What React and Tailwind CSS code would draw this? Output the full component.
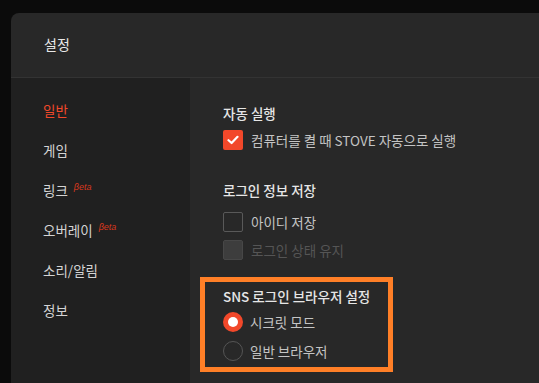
const font = { fontFamily: '"Noto Sans CJK KR", "Noto Sans", sans-serif' };

const menu = [
  { label: '일반', active: true },
  { label: '게임' },
  { label: '링크', beta: true },
  { label: '오버레이', beta: true },
  { label: '소리/알림' },
  { label: '정보' },
];

function Check({ checked, disabled }) {
  if (checked)
    return (
      <span className="w-5 h-5 rounded-[2px] bg-[#f2482a] flex items-center justify-center">
        <svg width="12" height="10" viewBox="0 0 12 10" fill="none">
          <path d="M1.5 5.2 L4.6 8 L10.5 1.8" stroke="white" strokeWidth="2.2" strokeLinecap="round" strokeLinejoin="round" />
        </svg>
      </span>
    );
  return (
    <span
      className={`w-5 h-5 rounded-[2px] border ${
        disabled ? 'bg-[#3d3d3d] border-[#474747]' : 'border-[#595959]'
      }`}
    />
  );
}

function Radio({ on }) {
  return on ? (
    <span className="w-5 h-5 rounded-full bg-[#f2482a] flex items-center justify-center">
      <span className="w-[10px] h-[10px] rounded-full bg-white" />
    </span>
  ) : (
    <span className="w-5 h-5 rounded-full border border-[#555]" />
  );
}

export default function App() {
  return (
    <div className="w-[539px] h-[383px] overflow-hidden bg-[#0b0b0b] pl-[11px] pt-[13px]" style={font}>
      <div className="w-[560px] h-[400px] rounded-tl-lg bg-[#282828] overflow-hidden">
        <div className="h-[65px] border-b border-[#333] flex items-center pl-[33px] pb-[2px]">
          <h1 className="text-[14px] text-[#e8e8e8]">설정</h1>
        </div>
        <div className="flex h-full">
          <nav className="w-[179px] bg-[#202020] pt-[12px] pl-[32px]">
            {menu.map((m) => (
              <div key={m.label} className="h-10 flex items-center">
                <span className={`text-[13.5px] ${m.active ? 'text-[#f2482a]' : 'text-[#d4d4d4]'}`}>
                  {m.label}
                </span>
                {m.beta && (
                  <span
                    className="ml-[6px] -mt-[4px] text-[9px] italic text-[#d9381e]"
                    style={{ fontFamily: '"Liberation Sans", sans-serif' }}
                  >
                    βeta
                  </span>
                )}
              </div>
            ))}
          </nav>
          <main className="flex-1 pl-[33px] pt-[25px]">
            <h2 className="h-5 leading-5 text-[13.5px] font-medium text-[#e6e6e6]">자동 실행</h2>
            <label className="mt-[7px] flex items-center gap-2 h-5">
              <Check checked />
              <span className="text-[13.5px] text-[#c4c4c4]">컴퓨터를 켤 때 STOVE 자동으로 실행</span>
            </label>

            <h2 className="mt-[30px] h-5 leading-5 text-[13.5px] font-medium text-[#e6e6e6]">로그인 정보 저장</h2>
            <label className="mt-[12px] flex items-center gap-2 h-5">
              <Check />
              <span className="text-[13.5px] text-[#c4c4c4]">아이디 저장</span>
            </label>
            <label className="mt-[8px] flex items-center gap-2 h-5">
              <Check disabled />
              <span className="text-[13.5px] text-[#555]">로그인 상태 유지</span>
            </label>

            <section className="mt-[17px] -ml-[23px] w-[193px] border-[5px] border-[#ff7f27] pl-[18px] pt-[4px] pb-[6px]">
              <h2 className="h-5 leading-5 text-[13.5px] font-medium text-[#e6e6e6] whitespace-nowrap">SNS 로그인 브라우저 설정</h2>
              <label className="mt-[6px] flex items-center gap-[7px] h-5">
                <Radio on />
                <span className="text-[13.5px] text-[#c4c4c4]">시크릿 모드</span>
              </label>
              <label className="mt-[9px] flex items-center gap-[7px] h-5">
                <Radio />
                <span className="text-[13.5px] text-[#c4c4c4]">일반 브라우저</span>
              </label>
            </section>
          </main>
        </div>
      </div>
    </div>
  );
}
